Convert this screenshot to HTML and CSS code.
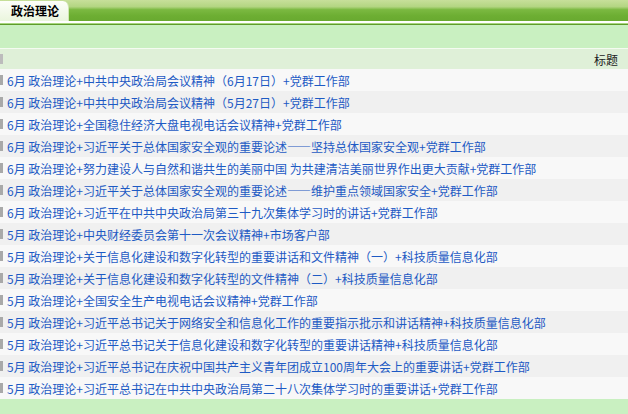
FILE: index.html
```html
<!DOCTYPE html>
<html lang="zh-CN">
<head>
<meta charset="utf-8">
<title>政治理论</title>
<link rel="stylesheet" href="styles.css">
</head>
<body>
<div class="page">
  <div class="tabbar">
    <div class="tab">政治理论</div>
  </div>
  <div class="line-white"></div>
  <div class="line-light"></div>
  <div class="line-dark"></div>
  <div class="band"></div>
  <div class="line-white1"></div>
  <div class="head"><span class="mark"></span><span class="head-title">标题</span></div>
  <div class="list">
    <div class="row"><span class="mark"></span><a class="link">6月 政治理论+中共中央政治局会议精神（6月17日）+党群工作部</a></div>
    <div class="row"><span class="mark"></span><a class="link">6月 政治理论+中共中央政治局会议精神（5月27日）+党群工作部</a></div>
    <div class="row"><span class="mark"></span><a class="link">6月 政治理论+全国稳住经济大盘电视电话会议精神+党群工作部</a></div>
    <div class="row"><span class="mark"></span><a class="link">6月 政治理论+习近平关于总体国家安全观的重要论述——坚持总体国家安全观+党群工作部</a></div>
    <div class="row"><span class="mark"></span><a class="link">6月 政治理论+努力建设人与自然和谐共生的美丽中国 为共建清洁美丽世界作出更大贡献+党群工作部</a></div>
    <div class="row"><span class="mark"></span><a class="link">6月 政治理论+习近平关于总体国家安全观的重要论述——维护重点领域国家安全+党群工作部</a></div>
    <div class="row"><span class="mark"></span><a class="link">6月 政治理论+习近平在中共中央政治局第三十九次集体学习时的讲话+党群工作部</a></div>
    <div class="row"><span class="mark"></span><a class="link">5月 政治理论+中央财经委员会第十一次会议精神+市场客户部</a></div>
    <div class="row"><span class="mark"></span><a class="link">5月 政治理论+关于信息化建设和数字化转型的重要讲话和文件精神（一）+科技质量信息化部</a></div>
    <div class="row"><span class="mark"></span><a class="link">5月 政治理论+关于信息化建设和数字化转型的文件精神（二）+科技质量信息化部</a></div>
    <div class="row"><span class="mark"></span><a class="link">5月 政治理论+全国安全生产电视电话会议精神+党群工作部</a></div>
    <div class="row"><span class="mark"></span><a class="link">5月 政治理论+习近平总书记关于网络安全和信息化工作的重要指示批示和讲话精神+科技质量信息化部</a></div>
    <div class="row"><span class="mark"></span><a class="link">5月 政治理论+习近平总书记关于信息化建设和数字化转型的重要讲话精神+科技质量信息化部</a></div>
    <div class="row"><span class="mark"></span><a class="link">5月 政治理论+习近平总书记在庆祝中国共产主义青年团成立100周年大会上的重要讲话+党群工作部</a></div>
    <div class="row"><span class="mark"></span><a class="link">5月 政治理论+习近平总书记在中共中央政治局第二十八次集体学习时的重要讲话+党群工作部</a></div>
  </div>
  <div class="foot"></div>
</div>
</body>
</html>
```

FILE: styles.css
```css
* { box-sizing: border-box; }
html, body { margin: 0; padding: 0; }
body {
  width: 628px;
  height: 414px;
  overflow: hidden;
  background: #c9f0c1;
  font-family: "Noto Sans CJK SC", "Microsoft YaHei", sans-serif;
  font-size: 12px;
}
.page {
  display: flex;
  flex-direction: column;
  width: 628px;
  height: 414px;
}
.tabbar {
  height: 21px;
  display: flex;
  align-items: flex-end;
  background: linear-gradient(#c7df9a 0%, #b3d582 32%, #7bb941 46%, #6dae33 75%, #69aa30 100%);
}
.tab {
  width: 69px;
  height: 20px;
  padding-left: 11px;
  line-height: 20px;
  font-weight: bold;
  color: #000;
  background: linear-gradient(#fdfefa, #eaf5dd);
  border-top-right-radius: 6px;
  border-right: 1px solid #cfe6b2;
}
.line-white { height: 2px; background: #ffffff; }
.line-light { height: 1px; background: #a8d67e; }
.line-dark { height: 1px; background: #5e9c2b; }
.band { height: 23px; background: #c9f0c1; }
.line-white1 { height: 1px; background: #f4fbf1; }
.head {
  height: 20px;
  display: flex;
  align-items: center;
  background: #dff0d8;
  color: #222;
}
.head .mark { background: #bcbcbc; }
.head-title {
  margin-left: auto;
  padding-right: 10px;
}
.list {
  display: flex;
  flex-direction: column;
}
.row {
  height: 22px;
  display: flex;
  align-items: center;
  background: #f8f8f8;
  white-space: nowrap;
  overflow: hidden;
}
.row:nth-child(even) { background: #f0f0f0; }
.mark {
  flex: none;
  width: 3px;
  height: 10px;
  background: #a9a9a9;
}
.link {
  margin-left: 4px;
  color: #1d5ac4;
  text-decoration: none;
}
.foot { flex: 1; background: #c9f0c1; }
```
